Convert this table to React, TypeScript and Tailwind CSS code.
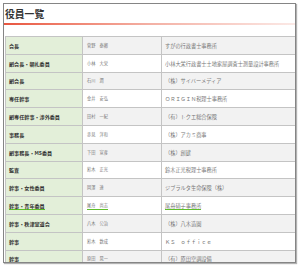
const members = [
  ["会長", "菅野　泰卿", "すがの行政書士事務所"],
  ["副会長・朝礼委員", "小林　大栄", "小林大栄行政書士土地家屋調査士測量設計事務所"],
  ["副会長", "石川　潤", "（株）サイバーメディア"],
  ["専任幹事", "金井　安弘", "ＯＲＩＧＩＮ税理士事務所"],
  ["副専任幹事・渉外委員", "田村　一紀", "（有）トクエ総合保険"],
  ["事務長", "赤見　洋和", "（株）アカミ商事"],
  ["副事務長・MS委員", "下田　宣彦", "（株）創建"],
  ["監査", "鈴木　正光", "鈴木正光税理士事務所"],
  ["幹事・女性委員", "岡澤　達", "ジブラルタ生命保険（株）"],
  ["幹事・青年委員", "尾舟　尚志", "尾舟硝子事務所"],
  ["幹事・秩津宣道会", "八木　公治", "（株）八木造園"],
  ["幹事", "鈴木　数成", "ＫＳ　ｏｆｆｉｃｅ"],
  ["幹事", "原田　晃一", "（有）原田空調設備"],
]

// the row that is marked with the green underline
const marked = 9

export default function App() {
  return (
    <div
      className="w-[300px] h-[267px] bg-white overflow-hidden pt-[3px] pl-[3px]"
      style={{ fontFamily: '"Noto Sans CJK JP", "Noto Sans", sans-serif' }}
    >
      <div className="w-[293px] h-[260px] border border-[#858585] shadow-[1px_1px_1px_rgba(0,0,0,0.3)] bg-white overflow-hidden">
        <h2 className="pl-[1px] pt-[3px] text-[9.8px] leading-[14px] font-bold text-[#333]">役員一覧</h2>
        <div className="mt-[2px] h-[2px] bg-gradient-to-r from-[#e8553f] via-[#f3b0a4] to-[#fbe9e6]" />

        <div className="mt-[11px] ml-[1px] w-[300px] border-t border-l border-[#c4c4c4]">
          {members.map(([role, name, company], i) => {
            const line = i === marked ? "border-b border-[#5fbf2a]" : ""
            return (
              <div
                key={i}
                className={
                  "grid grid-cols-[77px_79px_1fr] h-[17.8px] border-b border-[#c4c4c4] " +
                  (i % 2 === 0 ? "bg-[#f2f2f2]" : "bg-white")
                }
              >
                <div className="flex items-center pl-[3px] bg-[#e3efd9] border-r border-[#c4c4c4]">
                  <span className={"text-[5.1px] leading-[7px] font-bold text-[#333] " + line}>{role}</span>
                </div>
                <div className="flex items-center pl-[4px] border-r border-[#c4c4c4]">
                  <span className={"text-[4.2px] leading-[7px] text-[#777] " + line}>{name}</span>
                </div>
                <div className="flex items-center pl-[3px]">
                  <span className={"text-[5.2px] leading-[7px] text-[#777] " + line}>{company}</span>
                </div>
              </div>
            )
          })}
        </div>
      </div>
    </div>
  )
}
